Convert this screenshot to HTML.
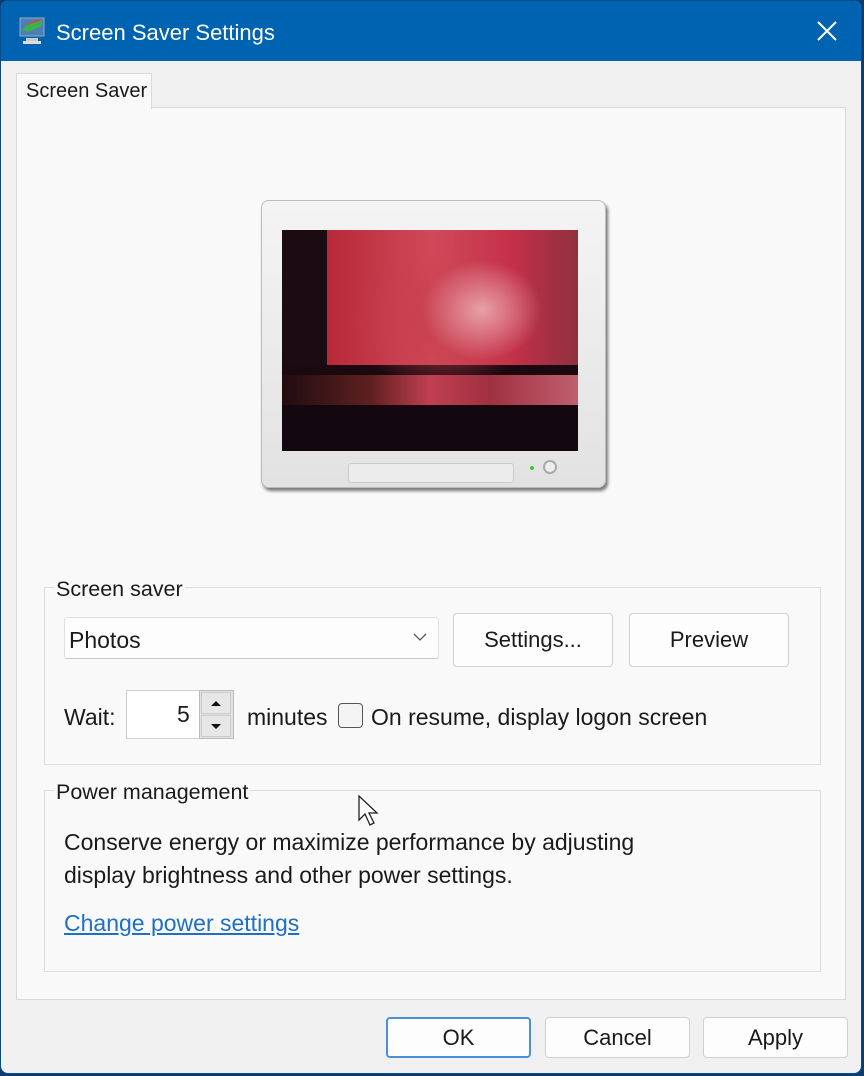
<!DOCTYPE html>
<html><head><style>
*{box-sizing:border-box;margin:0;padding:0}
body{width:864px;height:1076px;background:#0b3d73;font-family:"Liberation Sans",sans-serif;color:#1a1a1a;position:relative;overflow:hidden}
.win{position:absolute;left:0;top:0;width:862px;height:1074px;background:#f0f0f0;border:1px solid #0a4a8a;border-radius:8px;overflow:hidden}
.title{position:absolute;left:-1px;top:-1px;width:864px;height:61px;background:#0063b1;color:#fff;font-size:22px}
.title span{position:absolute;left:56px;top:20px}
.abs{position:absolute}
.panel{position:absolute;left:15px;top:106px;width:830px;height:893px;background:#f9f9f9;border:1px solid #d9d9d9}
.tab{position:absolute;left:15px;top:72px;width:136px;height:36px;background:#f9f9f9;border:1px solid #d9d9d9;border-bottom:none;font-size:20px;padding:6px 0 0 9px;z-index:2}
.grp{position:absolute;border:1px solid #dcdcdc}
.lbl{position:absolute;font-size:21.5px;background:#f9f9f9;padding:0 2px}
.btn{position:absolute;background:#fdfdfd;border:1px solid #d0d0d0;border-radius:4px;font-size:22px;text-align:center}
.t{position:absolute;font-size:23px;white-space:nowrap}
</style></head><body>
<div class="win">
<div class="title">
<svg class="abs" style="left:18px;top:16px" width="28" height="30" viewBox="0 0 28 30"><rect x="2" y="2" width="24" height="18" fill="#4a7fb8" stroke="#9ab" /><path d="M4 14 L12 6 L24 4 L24 10 L10 16 Z" fill="#3cb04a"/><path d="M10 8 L22 4" stroke="#d44" stroke-width="1.5"/><rect x="8" y="22" width="12" height="3" fill="#ccc"/><rect x="5" y="25" width="18" height="3" fill="#ddd"/></svg>
<span>Screen Saver Settings</span>
<svg class="abs" style="left:816px;top:20px" width="22" height="22" viewBox="0 0 22 22"><path d="M2 2L20 20M20 2L2 20" stroke="#fff" stroke-width="2"/></svg>
</div>
<div class="panel"></div>
<div class="tab">Screen Saver</div>

<div class="abs" style="left:260px;top:199px;width:345px;height:288px;background:linear-gradient(#f4f4f4,#e2e2e2);border:1px solid #bbb;border-radius:8px;box-shadow:2px 3px 3px #777"></div>
<div class="abs" style="left:281px;top:229px;width:296px;height:221px;background:
radial-gradient(ellipse 60px 50px at 200px 80px,#e8a0a8,transparent),
radial-gradient(ellipse 90px 70px at 160px 90px,#c84050,transparent),
linear-gradient(to bottom,transparent 0,transparent 135px,#1a0a10 135px),
linear-gradient(90deg,#1a0c12 0,#1a0c12 45px,#b82838 45px,#d04a5a 150px,#c43048 230px,#903040 296px);"></div>
<div class="abs" style="left:281px;top:374px;width:296px;height:30px;background:linear-gradient(90deg,#200c10,#602020 30%,#c04050 50%,#a03040 70%,#c06070)"></div>
<div class="abs" style="left:281px;top:404px;width:296px;height:46px;background:#140810"></div>
<div class="abs" style="left:347px;top:462px;width:166px;height:20px;border:1px solid #ccc;border-radius:3px;background:#ececec"></div>
<div class="abs" style="left:542px;top:459px;width:14px;height:14px;border-radius:50%;border:2px solid #aaa;background:#eee"></div>
<div class="abs" style="left:529px;top:465px;width:4px;height:4px;border-radius:50%;background:#3c3"></div>

<div class="grp" style="left:43px;top:586px;width:777px;height:178px"></div>
<div class="lbl" style="left:53px;top:576px">Screen saver</div>
<div class="abs" style="left:63px;top:616px;width:375px;height:42px;background:#fdfdfd;border:1px solid #e0e0e0;border-bottom-color:#c8c8c8;border-radius:3px"></div>
<div class="t" style="left:68px;top:626px">Photos</div>
<svg class="abs" style="left:412px;top:632px" width="14" height="9" viewBox="0 0 14 9"><path d="M1 1L7 7L13 1" stroke="#555" fill="none" stroke-width="1.3"/></svg>
<div class="btn" style="left:452px;top:612px;width:160px;height:54px;line-height:52px">Settings...</div>
<div class="btn" style="left:628px;top:612px;width:160px;height:54px;line-height:52px">Preview</div>
<div class="t" style="left:63px;top:703px">Wait:</div>
<div class="abs" style="left:125px;top:689px;width:108px;height:49px;background:#fff;border:1px solid #d0d0d0;border-right:none"></div>
<div class="t" style="left:176px;top:700px">5</div>
<div class="abs" style="left:198px;top:689px;width:35px;height:49px;background:#e0e0e0;border:1px solid #bbb"></div>
<div class="abs" style="left:200px;top:691px;width:30px;height:22px;background:#e6e6e6;border:1px solid #ccc"></div>
<div class="abs" style="left:200px;top:714px;width:30px;height:22px;background:#e6e6e6;border:1px solid #ccc"></div>
<svg class="abs" style="left:208px;top:697px" width="14" height="34" viewBox="0 0 14 34"><path d="M2 8L7 3L12 8Z M2 26L12 26L7 31Z" fill="#111"/></svg>
<div class="t" style="left:246px;top:703px">minutes</div>
<div class="abs" style="left:337px;top:702px;width:25px;height:25px;border:1.5px solid #555;border-radius:4px;background:#f4f4f4"></div>
<div class="t" style="left:370px;top:703px">On resume, display logon screen</div>

<div class="grp" style="left:43px;top:789px;width:777px;height:182px"></div>
<div class="lbl" style="left:53px;top:779px">Power management</div>
<div class="t" style="left:63px;top:828px">Conserve energy or maximize performance by adjusting</div>
<div class="t" style="left:63px;top:861px">display brightness and other power settings.</div>
<div class="t" style="left:63px;top:909px;color:#1f6fc5;text-decoration:underline">Change power settings</div>
<svg class="abs" style="left:356px;top:793px" width="26" height="36" viewBox="0 0 26 36"><path d="M2 2L2 26L8 20L13 31L17 29L12 19L20 19Z" fill="#fff" stroke="#222" stroke-width="1.3"/></svg>

<div class="btn" style="left:385px;top:1016px;width:145px;height:41px;line-height:38px;border:2px solid #4a90d9">OK</div>
<div class="btn" style="left:544px;top:1016px;width:145px;height:41px;line-height:40px">Cancel</div>
<div class="btn" style="left:702px;top:1016px;width:145px;height:41px;line-height:40px">Apply</div>
</div>
</body></html>
